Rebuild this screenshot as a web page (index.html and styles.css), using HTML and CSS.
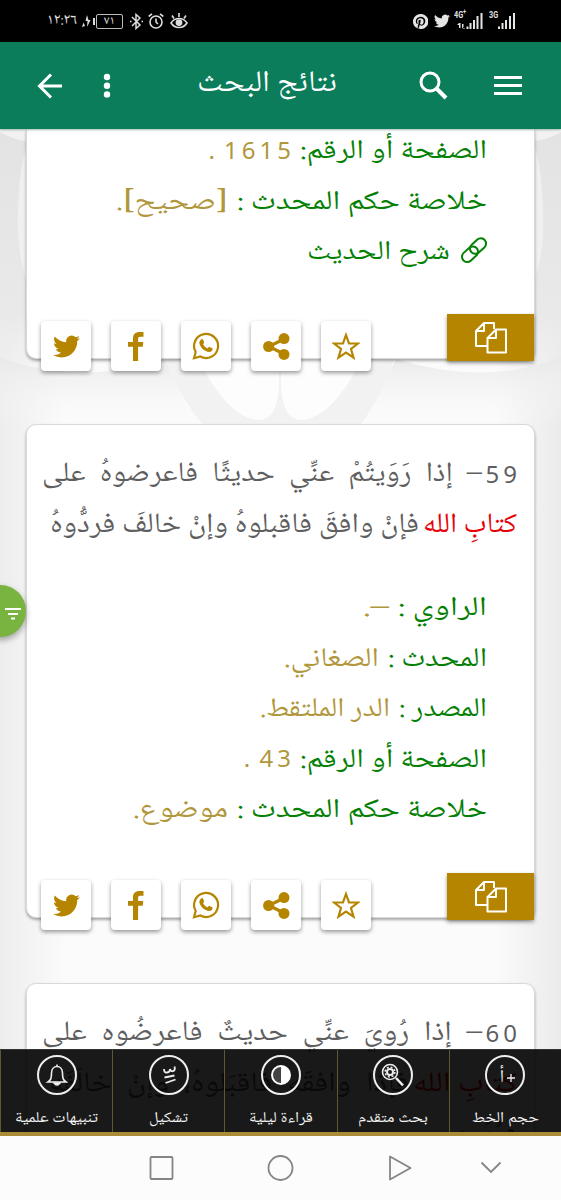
FILE: index.html
```html
<!DOCTYPE html>
<html lang="ar" dir="rtl">
<head>
<meta charset="utf-8">
<title>نتائج البحث</title>
<link rel="stylesheet" href="styles.css">
</head>
<body>
<svg width="0" height="0" class="defs" aria-hidden="true">
  <symbol id="tw" viewBox="0 0 24 24"><path d="M23.95 4.57a10 10 0 0 1-2.82.77 4.96 4.96 0 0 0 2.16-2.72c-.95.55-2 .95-3.13 1.18a4.92 4.92 0 0 0-8.38 4.48C7.69 8.1 4.07 6.13 1.64 3.16a4.92 4.92 0 0 0 1.52 6.57 4.9 4.9 0 0 1-2.23-.61v.06c0 2.39 1.7 4.38 3.95 4.83a5 5 0 0 1-2.22.08 4.93 4.93 0 0 0 4.6 3.42A9.87 9.87 0 0 1 0 19.54a13.99 13.99 0 0 0 7.55 2.21c9.05 0 14-7.5 14-13.98 0-.21 0-.42-.02-.63a9.94 9.94 0 0 0 2.46-2.55z"/></symbol>
  <symbol id="fb" viewBox="0 0 16 29"><path d="M15.5 0v4.8h-3.2c-1.8 0-2.2.8-2.2 2.2v3h5.2l-.6 4.700h-4.600V29H5V14.700H0V10h5V6.200C5 2.200 7.600 0 11.500 0z"/></symbol>
  <symbol id="wa" viewBox="0 0 28 28"><path d="M2 26.200 3.700 20A12 12 0 1 1 8.300 24.500z" fill="none" stroke="currentColor" stroke-width="2.200"/><path d="M9.200 7.500c.7-.7 1.500-.5 1.800.1l1.100 2.700c.2.500-.1.900-1 1.900 1 2 2.500 3.300 4.600 4.100.8-.9 1.200-1.700 1.800-1.400l2.700 1.300c.6.300.5 1.200.2 1.900-.5 1.200-2 2-3.300 1.900-4.500-.5-8.700-4.300-9.700-8.500-.3-1.500.600-3 1.800-4z"/></symbol>
  <symbol id="share" viewBox="0 0 27 27"><path d="M6 13.500 21 6M6 13.500l15 7.500" fill="none" stroke="currentColor" stroke-width="3.200"/><circle cx="5.600" cy="13.500" r="5.500"/><circle cx="21" cy="5.600" r="5.500"/><circle cx="21" cy="21.400" r="5.500"/></symbol>
  <symbol id="star" viewBox="0 0 28 28"><path d="m14 3 3 8.300 9 .2-7 5.500 2.500 8.600-7.500-5-7.500 5L9 17l-7-5.500 9-.2z" fill="none" stroke="currentColor" stroke-width="2.200"/></symbol>
  <symbol id="copy" viewBox="0 0 32 32"><g fill="none" stroke="currentColor" stroke-width="2" stroke-linejoin="round"><path d="M12 24H1V9l8-8h10v6M9 1v8H1"/><path d="M21 7.500h10v23H12.500V16zM21 7.500V16h-8.500"/></g></symbol>
</svg>
<div class="screen">
  <header class="status" dir="ltr">
    <div class="status-side left">
      <span class="clock fit" data-w="30">١٢:٢٦</span>
      <svg width="13" height="14" viewBox="0 0 13 14" fill="#ddd"><path d="M1.500 8.500 3 12 0 13zM5 1l-1.500 6h2L5 13l3.500-7H6.500zM11 4h2v7h-2z"/></svg>
      <span class="battery">٧١</span>
      <svg class="bt" width="13" height="17" viewBox="0 0 13 17" fill="none" stroke="#ddd" stroke-width="1.500"><path d="m2 4 8 8-4 3.500v-14L10 5l-8 8M0 8.500h1.500M11.500 8.500H13"/></svg>
      <svg class="alarm" width="16" height="16" viewBox="0 0 16 16" fill="none" stroke="#ddd" stroke-width="1.600"><circle cx="8" cy="9" r="6"/><path d="M8 5.500V9l2 2M.7 3.500 4 .9M15.300 3.500 12 .9"/></svg>
      <svg class="eye" width="18" height="16" viewBox="0 0 18 16" fill="none" stroke="#ddd" stroke-width="1.600"><path d="M1 10c4-6 12-6 16 0-4 6-12 6-16 0zM9 0v4M2 2.500l2 3M16 2.500l-2 3"/><circle cx="9" cy="9.600" r="2.600" fill="#ddd"/></svg>
    </div>
    <div class="status-side right">
      <svg width="15" height="15" viewBox="0 0 24 24" fill="#e4e4e4"><path d="M12 0a12 12 0 0 0-4.400 23.200c-.1-.9-.2-2.400 0-3.400l1.500-6s-.4-.7-.4-1.800c0-1.700 1-2.900 2.200-2.900 1 0 1.500.8 1.500 1.700 0 1-.7 2.600-1 4-.3 1.200.6 2.200 1.800 2.200 2.100 0 3.800-2.200 3.800-5.500 0-2.900-2.100-4.900-5-4.900-3.400 0-5.400 2.600-5.400 5.200 0 1 .4 2.100.9 2.700l-.4 1.600c-1.600-.7-2.600-3-2.600-4.600C4.500 7.700 7.200 4.200 12.300 4.200c4.200 0 7.400 3 7.400 6.900 0 4.100-2.600 7.500-6.200 7.500-1.200 0-2.400-.7-2.700-1.400l-.8 2.900c-.3 1-1 2.300-1.500 3.100A12 12 0 1 0 12 0z"/></svg>
      <svg class="tws" width="16" height="16" fill="#e4e4e4"><use href="#tw"/></svg>
      <span class="signal"><b>4G<sup>+</sup></b><svg width="29" height="16" viewBox="0 0 29 16" fill="#e4e4e4"><path d="M5 10h1.500v5H5zM3 12l2-2v2zM8 11h1.500v5H8zM8 16h3l-2-2zM12.500 13.500h2V16h-2zM15.500 10H17.500v6h-2zM19 7h2v9h-2zM22.500 3h2v13h-2zM26.500 0h2v16h-2z"/></svg></span>
      <span class="signal s3"><b>3G</b><svg width="26" height="16" viewBox="0 0 26 16" fill="#e4e4e4"><path d="M9 13.500h2V16H9zM12.500 10h2v6h-2zM16 7h2v9h-2zM20 3h2v13h-2zM24 0h2v16h-2z"/></svg></span>
    </div>
  </header>
  <nav class="bar">
    <svg class="menu" width="28" height="20" viewBox="0 0 28 20" fill="#fff"><path d="M0 0h28v3H0zM0 8h28v3H0zM0 16h28v3H0z"/></svg>
    <svg class="search" width="29" height="29" viewBox="0 0 29 29" fill="none" stroke="#fff" stroke-width="3"><circle cx="11" cy="11" r="9"/><path d="m17.500 17.500 9.500 9.500" stroke-width="4"/></svg>
    <h1><span class="fit" data-w="140">نتائج البحث</span></h1>
    <svg class="dots" width="8" height="26" viewBox="0 0 8 26" fill="#fff"><circle cx="4" cy="4" r="3.200"/><circle cx="4" cy="12.700" r="3.200"/><circle cx="4" cy="21.400" r="3.200"/></svg>
    <svg class="back" width="26" height="26" viewBox="0 0 26 26" fill="none" stroke="#fff" stroke-width="3"><path d="M25 13H3M14 1.500 2.500 13 14 24.500"/></svg>
  </nav>
  <main class="results">
    <svg class="pattern" width="561" height="920" viewBox="0 0 561 920" preserveAspectRatio="none" aria-hidden="true">
      <defs>
        <linearGradient id="shade" x1="0" x2="1"><stop offset="0" stop-color="#ededed"/><stop offset=".12" stop-color="#fbfbfb"/><stop offset=".88" stop-color="#fbfbfb"/><stop offset="1" stop-color="#ebebeb"/></linearGradient>
        <linearGradient id="top" x1="0" x2="0" y1="0" y2="1"><stop offset="0" stop-color="#e3e3e3"/><stop offset=".78" stop-color="#e9e9e9"/><stop offset="1" stop-color="#eee" stop-opacity="0"/></linearGradient>
        <linearGradient id="swoop" x1="0" x2="0" y1="0" y2="1"><stop offset="0" stop-color="#e9e9e9"/><stop offset="1" stop-color="#fafafa" stop-opacity="0"/></linearGradient>
      </defs>
      <rect width="561" height="920" fill="url(#shade)"/>
      <path d="M0 0h30v238Q12 236 0 228zM561 0h-30v238q18-2 30-10z" fill="url(#top)"/>
      <path d="M0 228q75 30 165 2l30 66H0zM561 228q-75 30-165 2l-32 66h197z" fill="url(#swoop)"/>
      <path d="M165 228h230q-12 38-34 67H202q-24-29-37-67z" fill="#f2f2f2"/>
      <path d="M198 230h80q6 62-20 61-30-2-60-61zM362 230h-80q-6 62 20 61 30-2 60-61z" fill="#fdfdfd"/>
      <path d="M26 20q-6 15-8 60-2 40 8 70M535 20q6 15 8 60 2 40-8 70" fill="#f0f0f0"/>
      <path d="M0 0h26v12Q12 10 0 3zM561 0h-26v12q14-2 26-9z" fill="#f2f2f2"/>
    </svg>
    <article class="card first">
      <div class="details">
        <p><span class="label fit" data-w="187">الصفحة أو الرقم:</span><span class="value num">1615 .</span></p>
        <p><span class="label fit" data-w="250">خلاصة حكم المحدث :</span><span class="value fit" data-w="112">[صحيح].</span></p>
        <p><svg class="link" width="28" height="28" viewBox="0 0 28 28" fill="none" stroke="#048004" stroke-width="2"><rect x="9" y="4.800" width="18" height="10.500" rx="5.200" transform="rotate(-42 18 10)"/><rect x="1" y="13" width="18" height="10.500" rx="5.200" transform="rotate(-42 10 18.200)"/></svg><a class="label fit" data-w="143">شرح الحديث</a></p>
      </div>
      <footer class="actions"><button class="copy"><svg width="32" height="32"><use href="#copy"/></svg></button><button class="tile"><svg width="28" height="28"><use href="#star"/></svg></button><button class="tile"><svg width="27" height="27"><use href="#share"/></svg></button><button class="tile"><svg width="28" height="28"><use href="#wa"/></svg></button><button class="tile"><svg width="16" height="29"><use href="#fb"/></svg></button><button class="tile"><svg width="27" height="27"><use href="#tw"/></svg></button></footer>
    </article>
    <article class="card">
      <div class="hadith">
        <p><span class="num">59</span><span class="spread fit" data-w="440">– إذا رَوَيتُمْ عنِّي حديثًا فاعرضوهُ على</span></p>
        <p><em class="fit" data-w="94">كتابِ الله</em><span class="fit" data-w="369">فإنْ وافقَ فاقبلوهُ وإنْ خالفَ فردُّوهُ</span></p>
      </div>
      <div class="details">
        <p><span class="label fit" data-w="89">الراوي :</span><span class="value fit" data-w="26">–.</span></p>
        <p><span class="label fit" data-w="99">المحدث :</span><span class="value fit" data-w="95">الصغاني.</span></p>
        <p><span class="label fit" data-w="88">المصدر :</span><span class="value fit" data-w="130">الدر الملتقط.</span></p>
        <p><span class="label fit" data-w="187">الصفحة أو الرقم:</span><span class="value num">43 .</span></p>
        <p><span class="label fit" data-w="250">خلاصة حكم المحدث :</span><span class="value fit" data-w="95">موضوع.</span></p>
      </div>
      <footer class="actions"><button class="copy"><svg width="32" height="32"><use href="#copy"/></svg></button><button class="tile"><svg width="28" height="28"><use href="#star"/></svg></button><button class="tile"><svg width="27" height="27"><use href="#share"/></svg></button><button class="tile"><svg width="28" height="28"><use href="#wa"/></svg></button><button class="tile"><svg width="16" height="29"><use href="#fb"/></svg></button><button class="tile"><svg width="27" height="27"><use href="#tw"/></svg></button></footer>
    </article>
    <article class="card last">
      <div class="hadith">
        <p><span class="num">60</span><span class="spread fit" data-w="440">– إذا رُويَ عنِّي حديثٌ فاعرضُوه على</span></p>
        <p><em class="fit" data-w="104">كتابِ الله</em><span class="spread fit" data-w="360">فإذا وافقَه فاقبَلوهُ، وإنْ خالَفَه</span></p>
        <p><span class="fit" data-w="60">فرُدُّوه</span></p>
      </div>
    </article>
    <button class="filter"><svg width="18" height="14" viewBox="0 0 18 14" fill="#fff"><path d="M1 1h16v2H1zM4 6h10v2H4zM7 10.500h4v2H7z"/></svg></button>
  </main>
  <div class="tools">
    <div class="tool"><i><svg width="36" height="36" viewBox="2 2 36 36" fill="none" stroke="#eee"><path d="M22 23h8M26 19v8" stroke-width="1.300"/><text x="17" y="27" text-anchor="middle" fill="#eee" stroke="none" font-size="18">أ</text></svg></i><span class="fit" data-w="67">حجم الخط</span></div>
    <div class="tool"><i><svg width="40" height="40" viewBox="0 0 40 40" fill="none" stroke="#eee" stroke-width="1.600"><circle cx="17" cy="17" r="7.500"/><circle cx="17" cy="17" r="3" stroke-width="2"/><circle cx="17" cy="17" r="4.900" stroke-width="1.500" stroke-dasharray="2 1.850"/><path d="m23 23 7 7.500" stroke-width="2.500"/></svg></i><span class="fit" data-w="70">بحث متقدم</span></div>
    <div class="tool"><i><svg width="40" height="40" viewBox="0 0 40 40"><circle cx="20" cy="20" r="9" fill="#444" stroke="#fff" stroke-width="2"/><path d="M20 11a9 9 0 0 1 0 18z" fill="#fff"/></svg></i><span class="fit" data-w="64">قراءة ليلية</span></div>
    <div class="tool"><i><svg width="40" height="40" viewBox="0 0 40 40" fill="none" stroke="#eee" stroke-width="1.800"><path d="M15 14q0 4 3 3.500 3 0 3-3.500 1 3 3.500 2 2-1 1-4.500M15.500 22.500l10-2M16.500 28l10-3.500"/></svg></i><span class="fit" data-w="39">تشكيل</span></div>
    <div class="tool"><i><svg width="40" height="40" viewBox="0 0 40 40" fill="none" stroke="#eee" stroke-width="1.600"><path d="M11 27c3-2 3.500-4 3.500-9 0-4 2.500-6.500 5.500-6.500s5.500 2.500 5.500 6.500c0 5 .5 7 3.500 9zM20 9.500v2"/><path d="M17 28h6q-3 4-6 0z" fill="#eee"/></svg></i><span class="fit" data-w="83">تنبيهات علمية</span></div>
  </div>
  <div class="system" dir="ltr">
    <svg width="561" height="64" viewBox="0 0 561 64" fill="none" stroke="#858585" stroke-width="1.800"><rect x="150.500" y="21" width="22" height="22" rx="1"/><circle cx="280.500" cy="32" r="12"/><path d="M390 20.500v23L410.500 32z" stroke-linejoin="round"/><path d="m481.500 26.500 9.500 9.500 9.500-9.500"/></svg>
  </div>
</div>
<script src="fit.js"></script>
</body>
</html>
```
FILE: styles.css
```css
* { box-sizing: border-box; margin: 0; padding: 0; }
body { width: 561px; height: 1200px; overflow: hidden; font-family: "Noto Naskh Arabic", "Amiri", "DejaVu Sans", sans-serif; background: #fff; }
button { border: 0; font: inherit; }
svg { display: block; flex: none; }
.defs { position: absolute; }
.screen { position: relative; height: 1200px; display: flex; flex-direction: column; overflow: hidden; }
.fit { display: inline-block; white-space: nowrap; transform-origin: right center; flex: none; }
.status { height: 42px; flex: none; background: #000; color: #e4e4e4; display: flex; justify-content: space-between; padding: 0 46px 0 47px; position: relative; z-index: 2; }
.status-side { display: flex; align-items: center; }
.clock { font-size: 15px; margin-right: 5px; direction: ltr; transform-origin: left center; }
.battery { width: 27px; height: 15px; border: 1px solid #bbb; border-radius: 2px; font-size: 12px; line-height: 13px; text-align: center; margin-left: 1px; }
.bt { margin-left: 7px; }
.alarm { margin-left: 5px; }
.eye { margin-left: 6px; }
.tws { margin: 0 4px 0 6px; }
.signal { position: relative; display: block; }
.signal b { position: absolute; left: 0; top: -3px; font: bold 9px/11px Roboto, sans-serif; transform: scaleX(.8); transform-origin: left; }
.signal sup { font-size: 7px; line-height: 0; }
.signal.s3 { margin-left: 6px; }
.bar { height: 87px; flex: none; background: #0b7d5b; display: flex; align-items: center; padding: 0 39px 0 37px; position: relative; z-index: 2; box-shadow: 0 1px 2px #6b8f8499; }
.bar .search { margin-right: 46px; }
.bar h1 { margin-right: 82px; font-size: 30px; line-height: 50px; font-weight: 400; color: #fff; padding-bottom: 1px; }
.bar .dots { margin-right: auto; margin-left: 40px; }
.results { flex: none; height: 920px; position: relative; padding: 0 26px; display: flex; flex-direction: column; gap: 65px; }
.pattern { position: absolute; left: 0; top: 0; }
.card { position: relative; height: 494px; flex: none; background: #fff; border: 1px solid #d9d9d9; border-radius: 10px; box-shadow: 0 2px 3px #0005; }
.card.first { height: 230px; border-top: 0; border-radius: 0 0 10px 10px; }
.card.last { height: 300px; }
.details { padding-right: 47px; }
.details p { height: 50.500px; display: flex; align-items: center; gap: 9px; font-size: 27px; line-height: 50px; }
.first .details { margin-top: -2px; }
.link { margin: 0 -1px 7px 1px; }
.label { color: #048004; }
.value { color: #b1973c; }
.num { letter-spacing: 4px; unicode-bidi: isolate; font-family: "Noto Sans", sans-serif; font-size: 24px; white-space: nowrap; margin: -5px -4px 0 0; }
.value.num { word-spacing: -5px; }
.hadith { padding: 25px 17px 0; color: #5f5f5f; height: 159px; }
.hadith p { height: 51px; display: flex; align-items: center; gap: 4px; font-size: 28px; line-height: 51px; }
.hadith em { color: #e60008; font-style: normal; }
.spread { word-spacing: 7px; }
.actions { position: absolute; left: 14px; right: 0; bottom: -13px; display: flex; align-items: flex-end; gap: 20px; }
.copy { width: 87px; height: 47px; background: #b68500; color: #fff; display: flex; align-items: center; justify-content: center; margin: 0 0 10px auto; box-shadow: 0 2px 4px #0006; }
.tile { width: 50px; height: 50px; background: #fff; color: #b68500; fill: currentColor; border-radius: 4px; display: flex; align-items: center; justify-content: center; box-shadow: 0 2px 4px #0006; }
.filter { position: absolute; left: -25px; top: 456px; width: 51px; height: 52px; border-radius: 50%; background: #79b440; box-shadow: 0 3px 6px #0005; display: flex; align-items: center; justify-content: flex-start; direction: ltr; padding: 5px 0 0 29px; }
.tools { position: relative; z-index: 3; height: 87px; flex: none; background: linear-gradient(#000000e6 0 82px, #aa8b36 82px); display: flex; border-top: 1px solid #333; }
.tool { flex: 1; height: 82px; border-left: 1px solid #62572b; color: #f4f4f4; display: flex; flex-direction: column; align-items: center; font-size: 15px; }
.tool i { width: 40px; height: 40px; margin-top: 5px; border: 2px solid #eee; border-radius: 50%; font-style: normal; display: flex; align-items: center; justify-content: center; }
.tool span { margin-top: 13px; line-height: 22px; }
.system { height: 64px; flex: none; background: #fcfcfc; position: relative; z-index: 3; }
```
FILE: fit.js
```js
document.querySelectorAll('.fit').forEach(function (el) {
  var natural = el.getBoundingClientRect().width;
  var wanted = Number(el.dataset.w);
  el.style.width = wanted + 'px';
  el.style.transform = 'scaleX(' + wanted / natural + ')';
});
```
